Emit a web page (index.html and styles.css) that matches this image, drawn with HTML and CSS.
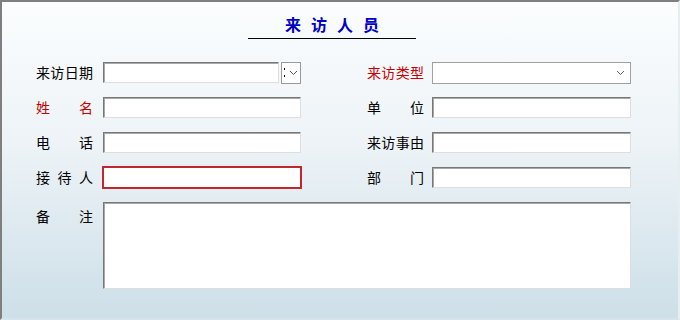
FILE: index.html
```html
<!DOCTYPE html>
<html lang="zh-CN">
<head>
<meta charset="utf-8"/>
<meta name="viewport" content="width=device-width,initial-scale=1.0"/>
<title>来访人员</title>
<link rel="stylesheet" href="styles.css">
</head>
<body>
<section class="panel">
    <h1 class="title">来访人员</h1>

    <form class="form">
        <label class="lbl">来访日期</label>
        <div class="date">
            <input class="txt" type="text">
            <span class="dtbtn">
                <i class="colon"></i>
                <svg width="9" height="6" viewBox="0 0 9 6"><polyline points="1,1 4.5,4.5 8,1" fill="none" stroke="#555" stroke-width="1"/></svg>
            </span>
        </div>
        <label class="lbl red">来访类型</label>
        <div class="combo">
            <svg width="9" height="6" viewBox="0 0 9 6"><polyline points="1,1 4.5,4.5 8,1" fill="none" stroke="#666" stroke-width="1"/></svg>
        </div>

        <label class="lbl red">姓名</label>
        <input class="txt" type="text">
        <label class="lbl">单位</label>
        <input class="txt wide" type="text">

        <label class="lbl">电话</label>
        <input class="txt" type="text">
        <label class="lbl">来访事由</label>
        <input class="txt wide" type="text">

        <label class="lbl">接待人</label>
        <input class="txt req" type="text">
        <label class="lbl">部门</label>
        <input class="txt wide" type="text">

        <label class="lbl note">备注</label>
        <textarea class="memo"></textarea>
    </form><!-- form -->
</section><!-- panel -->
</body>
</html>
```

FILE: styles.css
```css
*{margin:0;padding:0;box-sizing:border-box;}
body{background:#fff;font-family:"Noto Sans CJK SC","Liberation Sans",sans-serif;}

/* 바깥 패널 */
.panel{
    width:680px;height:320px;
    padding-top:11px;
    border-left:2px solid #7f7f7f;
    border-top:2px solid #7f7f7f;
    border-right:2px solid #e6eef2;
    border-bottom:2px solid #d8e4ea;
    background:linear-gradient(to bottom,#fbfdfe 0%,#edf3f7 45%,#cddfe8 100%);}

.title{
    width:168px;
    margin-left:246px;
    padding:0 0 3px 10px;
    border-bottom:1px solid #000;
    font-size:16px;line-height:22px;font-weight:bold;
    letter-spacing:10px;
    text-align:center;
    color:#0000c8;}

/* 입력 폼 */
.form{
    display:grid;
    grid-template-columns:67px 264px 65px 199px;
    grid-auto-rows:21px;
    row-gap:14px;
    align-items:center;
    margin-top:23px;
    padding-left:34px;}

.lbl{
    width:57px;
    font-size:14px;line-height:21px;
    text-align:justify;text-align-last:justify;
    color:#000;}
.lbl.red{color:#c80000;}
.lbl.note{align-self:start;padding-top:4px;}

.txt{
    display:block;
    width:198px;height:21px;
    background:#fff;
    border:1px solid;
    border-color:#777 #dedede #dedede #777;
    box-shadow:inset 1px 1px 0 #a9a9a9;
    outline:none;}
.txt.wide{width:199px;}
.txt.req{
    border-color:#c1272d;
    box-shadow:0 0 0 1px #c1272d;}

.date{display:flex;align-items:center;gap:2px;width:198px;}
.date .txt{width:176px;}
.dtbtn{
    display:flex;align-items:center;gap:4px;
    width:22px;height:22px;
    padding-left:2px;
    background:#fff;
    border:1px solid #9a9a9a;}
.colon{
    display:block;
    width:1px;height:9px;
    background:linear-gradient(#000 0,#000 2px,transparent 2px,transparent 7px,#000 7px);}

.combo{
    display:flex;justify-content:flex-end;align-items:center;
    width:199px;height:22px;
    padding-right:5px;
    background:#fff;
    border:1px solid #a0a0a0;}

.memo{
    grid-column:2 / 5;
    width:528px;height:87px;
    align-self:start;
    resize:none;
    background:#fff;
    border:1px solid;
    border-color:#777 #dedede #dedede #777;
    box-shadow:inset 1px 1px 0 #a9a9a9;
    outline:none;}
```
